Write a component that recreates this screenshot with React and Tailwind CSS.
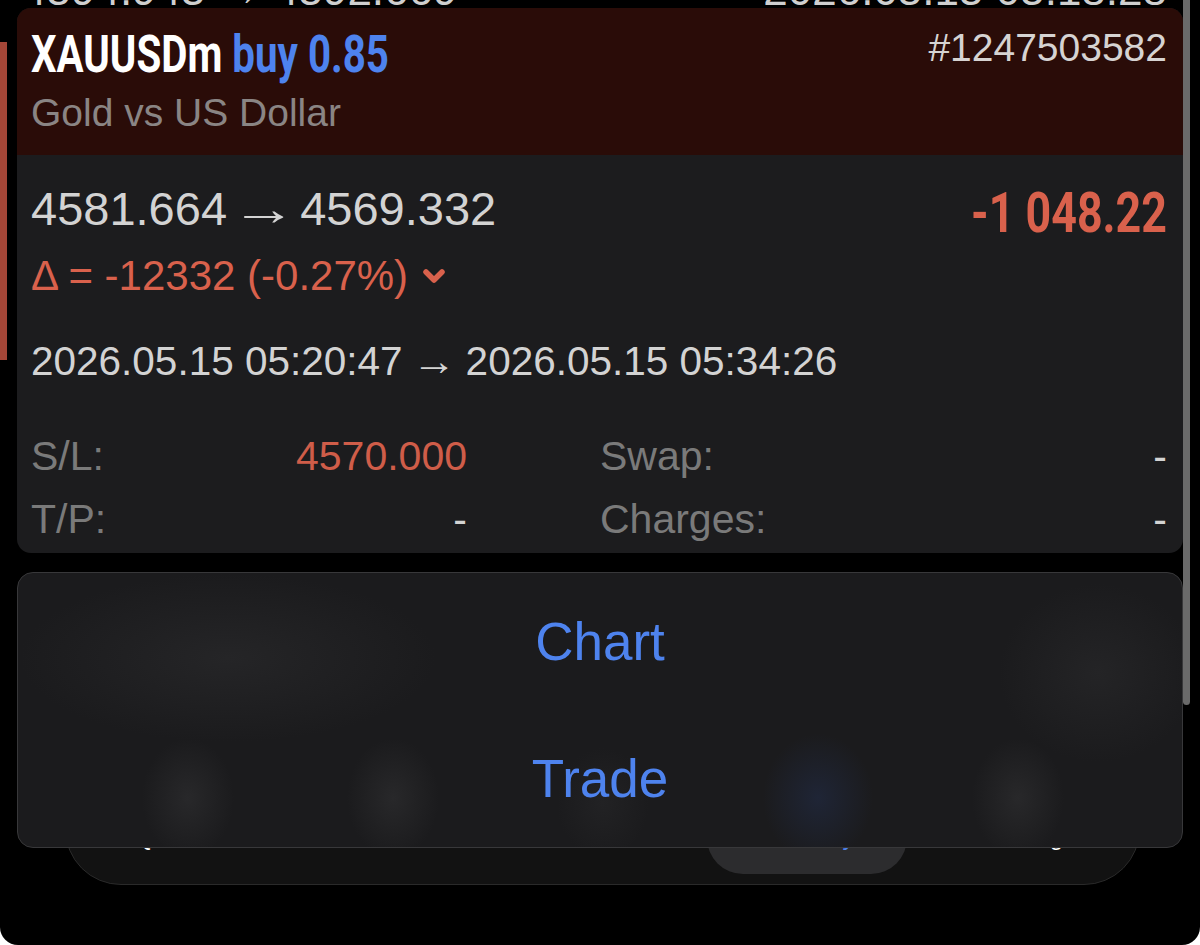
import React from "react";

const cond = "font-['Roboto','DejaVu_Sans',sans-serif]";

function Chevron() {
  return (
    <svg width="24" height="20" viewBox="0 0 24 20" className="ml-[14px] mt-[12px]">
      <polyline
        points="4,5 12,13 20,5"
        fill="none"
        stroke="#d9614c"
        strokeWidth="5.5"
        strokeLinecap="round"
        strokeLinejoin="round"
      />
    </svg>
  );
}

function Cell({ label, value, valueClass, pad }) {
  return (
    <div className={`flex justify-between items-start h-[40px] ${pad}`}>
      <span className="text-[41px] leading-[40px] text-[#7a7a7a]">{label}</span>
      <span className={`text-[41px] leading-[40px] ${valueClass}`}>{value}</span>
    </div>
  );
}

export default function App() {
  return (
    <div className="w-[1200px] h-[945px] bg-white">
      <div className="relative w-full h-full bg-black rounded-b-[18px] overflow-hidden font-['Liberation_Sans',Arial,sans-serif]">
        {/* left red marker */}
        <div className="absolute left-0 top-[42px] w-[7px] h-[318px] bg-[#a44637]" />
        {/* scrollbar */}
        <div className="absolute left-[1183px] top-0 w-[7px] h-[705px] rounded-b-full bg-[#6a6a6a] z-30" />

        {/* previous row peeking above */}
        <div className="h-[8px] overflow-hidden">
          <div className="mt-[-32px] flex justify-between pl-[22px] pr-[33px] text-[44px] leading-none text-[#cfcfcf]">
            <span>4594.945 → 4592.669</span>
            <span>2026.05.15 05:18:28</span>
          </div>
        </div>

        {/* position card */}
        <div className="relative z-10 mx-[17px] rounded-[14px] overflow-hidden bg-[#1c1c1e]">
          <div className="bg-[#2a0c08] pt-[21px] pb-[23px] pl-[14px] pr-[16px]">
            <div className="flex justify-between items-start">
              <div className={`${cond} origin-left scale-x-[0.79] font-bold text-[51px] leading-none whitespace-nowrap`}>
                <span className="text-white">XAUUSDm</span>{" "}
                <span className="text-[#4e83ee]">buy 0.85</span>
              </div>
              <div className="mt-[-1px] text-[39px] leading-none text-[#d6d3d2]">#1247503582</div>
            </div>
            <div className="mt-[13px] text-[39px] leading-none text-[#8a8584]">Gold vs US Dollar</div>
          </div>

          <div className="pt-[30px] pb-[14px] pl-[14px] pr-[16px]">
            <div className="flex justify-between items-start">
              <div>
                <div className="text-[47px] leading-none text-[#d3d3d3] whitespace-nowrap">
                  4581.664 <span className="inline-block scale-x-[1.4]">→</span> 4569.332
                </div>
                <div className="mt-[23px] flex items-start text-[42px] leading-none text-[#d9614c]">
                  <span>Δ = -12332 (-0.27%)</span>
                  <Chevron />
                </div>
                <div className="mt-[44px] text-[40.5px] leading-none text-[#d3d3d3] whitespace-nowrap">
                  2026.05.15 05:20:47 <span className="inline-block scale-x-[1.1]">→</span> 2026.05.15 05:34:26
                </div>
              </div>
              <div className={`${cond} mt-[0px] origin-right scale-x-[0.8] font-bold text-[56px] leading-none text-[#d9614c] whitespace-nowrap`}>
                -1 048.22
              </div>
            </div>

            <div className="mt-[54px] grid grid-cols-2 gap-y-[23px]">
              <Cell label="S/L:" value="4570.000" valueClass="text-[#cf5d49]" pad="pr-[132px]" />
              <Cell label="Swap:" value="-" valueClass="text-[#d3d3d3]" pad="pl-[1px]" />
              <Cell label="T/P:" value="-" valueClass="text-[#d3d3d3]" pad="pr-[132px]" />
              <Cell label="Charges:" value="-" valueClass="text-[#d3d3d3]" pad="pl-[1px]" />
            </div>
          </div>
        </div>

        {/* action menu */}
        <div className="relative z-20 mx-[17px] mt-[19px] h-[276px] rounded-[16px] border border-[#38383a] bg-[#1b1b1d] overflow-hidden flex flex-col">
          <div className="absolute left-[0px] top-[0px] w-[420px] h-[170px] bg-[radial-gradient(ellipse_at_center,#252527_0%,transparent_70%)]" />
          <div className="absolute left-[980px] top-[10px] w-[200px] h-[180px] bg-[radial-gradient(ellipse_at_center,#242426_0%,transparent_70%)]" />
          <div className="absolute left-[120px] top-[160px] w-[100px] h-[130px] bg-[radial-gradient(ellipse_at_center,#28282a_0%,transparent_65%)]" />
          <div className="absolute left-[325px] top-[160px] w-[100px] h-[130px] bg-[radial-gradient(ellipse_at_center,#28282a_0%,transparent_65%)]" />
          <div className="absolute left-[535px] top-[170px] w-[100px] h-[120px] bg-[radial-gradient(ellipse_at_center,#222224_0%,transparent_65%)]" />
          <div className="absolute left-[740px] top-[155px] w-[120px] h-[140px] bg-[radial-gradient(ellipse_at_center,#1f2536_0%,transparent_65%)]" />
          <div className="absolute left-[950px] top-[160px] w-[100px] h-[130px] bg-[radial-gradient(ellipse_at_center,#28282a_0%,transparent_65%)]" />
          <div className="relative flex-1 flex items-center justify-center text-[53px] leading-none text-[#4e83ee]">
            Chart
          </div>
          <div className="relative flex-1 flex items-center justify-center text-[53px] leading-none text-[#4e83ee]">
            Trade
          </div>
        </div>

        {/* tab bar behind the menu */}
        <div className="relative z-0 ml-[65px] mr-[60px] mt-[-120px] h-[157px] rounded-b-[56px] border border-[#2a2a2a] bg-[#121212] overflow-hidden">
          <div className="absolute left-[641px] top-[60px] w-[200px] h-[85px] rounded-b-[36px] bg-[#2c2c2e]" />
          <div className="absolute inset-x-0 top-[96px] flex text-[24px] leading-none">
            <span className="flex-1 text-center text-white">Quotes</span>
            <span className="flex-1 text-center text-white">Chart</span>
            <span className="flex-1 text-center text-white">Trade</span>
            <span className="flex-1 text-center text-[#4e83ee]">History</span>
            <span className="flex-1 text-center text-white">Settings</span>
          </div>
        </div>
      </div>
    </div>
  );
}
